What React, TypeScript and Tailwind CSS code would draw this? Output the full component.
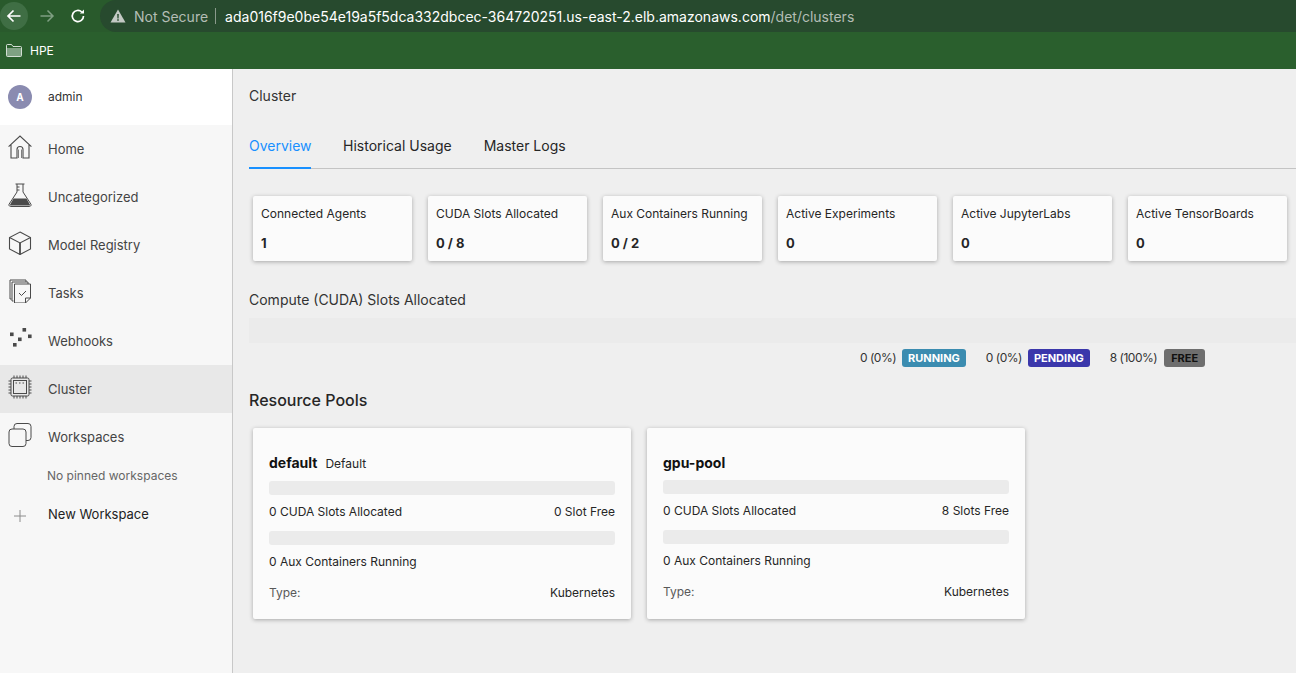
import React from "react";

const stats = [
  { label: "Connected Agents", value: "1" },
  { label: "CUDA Slots Allocated", value: "0 / 8" },
  { label: "Aux Containers Running", value: "0 / 2" },
  { label: "Active Experiments", value: "0" },
  { label: "Active JupyterLabs", value: "0" },
  { label: "Active TensorBoards", value: "0" },
];

const iconClass = "w-6 h-6 mb-1 shrink-0 text-[#4a4a4a]";

const HomeIcon = () => (
  <svg viewBox="0 0 24 24" fill="none" stroke="currentColor" strokeWidth="1.1" className={iconClass}>
    <path d="M0.6 11.6 L12 1 L23.4 11.6 M3 9.5 V23 H9 V14.5 A3 3 0 0 1 15 14.5 V23 H21 V9.5 M3 23 H4.5" />
    <path d="M10.5 23 V14.5 M13.5 23 V14.5" strokeWidth="0.7" />
  </svg>
);

const FlaskIcon = () => (
  <svg viewBox="0 0 24 24" fill="none" stroke="currentColor" strokeWidth="1" className={iconClass}>
    <path d="M7.5 1 H16.5 M9 1 V9 L1.2 21 A1.6 1.6 0 0 0 2.6 23.5 H21.4 A1.6 1.6 0 0 0 22.8 21 L15 9 V1 M9 4 H11.5 M9 7 H11.5" />
    <path d="M5.5 15.5 H18.5 L22.4 22.5 H1.6 Z" fill="currentColor" stroke="none" />
  </svg>
);

const CubeIcon = () => (
  <svg viewBox="0 0 24 24" fill="none" stroke="currentColor" strokeWidth="1.1" className={iconClass}>
    <path d="M12 1 L22.5 6.5 V18 L12 23.5 L1.5 18 V6.5 Z M1.5 6.5 L12 12 L22.5 6.5" />
    <path d="M12 12 V23.5" strokeWidth="1.8" />
  </svg>
);

const TasksIcon = () => (
  <svg viewBox="0 0 24 24" fill="none" stroke="currentColor" strokeWidth="1" className={iconClass}>
    <path d="M3.5 20 H2 V1 H18 V3" />
    <path d="M5.5 22 H4 V3 H20 V5" />
    <path d="M6.5 5 H22.5 V19 L17.5 24 H6.5 Z M22.5 19 H17.5 V24" />
    <path d="M11 14 L13.5 16.5 L18 12" />
  </svg>
);

const WebhooksIcon = () => (
  <svg viewBox="0 0 24 24" fill="currentColor" className={iconClass}>
    <rect x="2" y="5.5" width="3.6" height="3.6" />
    <rect x="14.5" y="1" width="3.6" height="3.6" />
    <rect x="20" y="7.5" width="3.6" height="3.6" />
    <rect x="10" y="10.5" width="3.6" height="3.6" />
    <rect x="5" y="16" width="3.6" height="3.6" />
  </svg>
);

const ClusterIcon = () => (
  <svg viewBox="0 0 24 24" fill="none" stroke="currentColor" strokeWidth="1" className={iconClass}>
    <rect x="3" y="3" width="18" height="18" rx="1.5" />
    <rect x="5.5" y="5.5" width="13" height="13" />
    <path d="M6 0.5 V3 M9 0.5 V3 M12 0.5 V3 M15 0.5 V3 M18 0.5 V3 M6 21 V23.5 M9 21 V23.5 M12 21 V23.5 M15 21 V23.5 M18 21 V23.5 M0.5 6 H3 M0.5 9 H3 M0.5 12 H3 M0.5 15 H3 M0.5 18 H3 M21 6 H23.5 M21 9 H23.5 M21 12 H23.5 M21 15 H23.5 M21 18 H23.5" />
    <path d="M7.5 8 H9 M11 8 H12.5 M14.5 8 H16" strokeWidth="1.2" />
  </svg>
);

const WorkspacesIcon = () => (
  <svg viewBox="0 0 24 24" fill="none" stroke="currentColor" strokeWidth="1" className={iconClass}>
    <rect x="1" y="6" width="17" height="17.5" rx="3" />
    <path d="M6 6 V3.5 A3 3 0 0 1 9 0.5 H20 A3 3 0 0 1 23 3.5 V14.5 A3 3 0 0 1 20 17.5 H18" />
  </svg>
);

const nav = [
  { label: "Home", icon: <HomeIcon /> },
  { label: "Uncategorized", icon: <FlaskIcon /> },
  { label: "Model Registry", icon: <CubeIcon /> },
  { label: "Tasks", icon: <TasksIcon /> },
  { label: "Webhooks", icon: <WebhooksIcon /> },
  { label: "Cluster", icon: <ClusterIcon />, active: true },
  { label: "Workspaces", icon: <WorkspacesIcon /> },
];

function Browser() {
  return (
    <div className="shrink-0 text-white">
      <div className="h-8 bg-[#295a2c] flex items-center">
        <div className="w-[28px] h-[28px] rounded-full bg-[#3f6e44] flex items-center justify-center">
          <svg viewBox="0 0 16 16" fill="none" stroke="white" strokeWidth="1.7" className="w-4 h-4">
            <path d="M14.5 8 H2 M7.5 2.5 L2 8 L7.5 13.5" />
          </svg>
        </div>
        <svg viewBox="0 0 16 16" fill="none" stroke="#7f9f83" strokeWidth="1.5" className="w-4 h-4 ml-[11px]">
          <path d="M1.5 8 H14 M8.5 2.5 L14 8 L8.5 13.5" />
        </svg>
        <svg viewBox="0 0 16 16" fill="none" stroke="white" strokeWidth="1.7" className="w-4 h-4 ml-[15px]">
          <path d="M13.5 8 A5.6 5.6 0 1 1 11.8 4" />
          <path d="M14 1.5 V5.6 H9.9 Z" fill="white" stroke="none" />
        </svg>
        <div className="ml-[14px] flex-1 h-8 rounded-l-full bg-[#274a2e] flex items-center pl-[10px] text-[14px]">
          <svg viewBox="0 0 16 16" className="w-4 h-4">
            <path d="M8 1.5 L15.5 14.5 H0.5 Z" fill="#c3c9c4" />
            <path d="M7.2 6 H8.8 L8.6 10.5 H7.4 Z M7.2 11.3 H8.8 V12.8 H7.2 Z" fill="#274a2e" />
          </svg>
          <span className="ml-[8px] text-[#b4bdb5]">Not Secure</span>
          <span className="ml-[7px] w-px h-[16px] bg-[#8a9a8c]" />
          <span className="ml-[9px]">ada016f9e0be54e19a5f5dca332dbcec-364720251.us-east-2.elb.amazonaws.com<span className="text-[#b4bdb5]">/det/clusters</span></span>
        </div>
      </div>
      <div className="h-[37px] bg-[#2a5f2d] flex items-center pl-[6px] text-[12px]">
        <svg viewBox="0 0 16 13" fill="none" stroke="white" strokeWidth="0.8" className="w-4 h-[13px]">
          <path d="M1 4 H15 V12 H1 Z" fill="#7fa183" stroke="none" />
          <path d="M0.5 1.5 A1 1 0 0 1 1.5 0.5 H5.5 L7 2.5 H14.5 A1 1 0 0 1 15.5 3.5 V11.5 A1 1 0 0 1 14.5 12.5 H1.5 A1 1 0 0 1 0.5 11.5 Z" />
        </svg>
        <span className="ml-[8px]">HPE</span>
      </div>
    </div>
  );
}

function Sidebar() {
  return (
    <aside className="w-[233px] shrink-0 bg-[#f7f7f7] border-r border-[#c8c8c8] text-[13px] text-[#444]">
      <div className="h-14 bg-white flex items-center pl-2">
        <div className="w-6 h-6 rounded-full bg-[#8a8bb0] text-white text-[10px] font-bold flex items-center justify-center">A</div>
        <span className="ml-4 text-[12px] text-[#333]">admin</span>
      </div>
      {nav.map((item) => (
        <div key={item.label} className={`h-12 flex items-center pl-2 ${item.active ? "bg-[#e8e8e8]" : ""}`}>
          {item.icon}
          <span className="ml-4 pt-[2px]">{item.label}</span>
        </div>
      ))}
      <div className="mt-[7px] pl-[47px] text-[12px] text-[#666] leading-4">No pinned workspaces</div>
      <div className="mt-[7px] h-12 flex items-center pl-[14px] text-[#222]">
        <svg viewBox="0 0 12 12" stroke="#8c8c8c" strokeWidth="1" className="w-3 h-3 mt-[2px]">
          <path d="M6 0 V12 M0 6 H12" />
        </svg>
        <span className="ml-[22px]">New Workspace</span>
      </div>
    </aside>
  );
}

function Legend({ text, label, className }: { text: string; label: string; className: string }) {
  return (
    <div className="flex items-center gap-[6px]">
      <span className="text-[12px] text-[#333] tracking-[-0.5px]">{text}</span>
      <span className={`h-[18px] rounded-[3px] text-[11px] font-bold flex items-center ${className}`}>{label}</span>
    </div>
  );
}

function PoolCard({ name, tag, slots, aux }: { name: string; tag?: string; slots: string; aux: string }) {
  return (
    <div className="w-[378px] h-[191px] bg-[#fbfbfb] rounded-[2px] shadow-[0_1px_4px_rgba(0,0,0,0.3)] px-4 pt-[24px] text-[12px] text-[#262626]">
      <div className={`flex items-baseline ${tag ? "h-[18px]" : "h-[17px]"}`}>
        <span className="text-[14px] font-bold text-[#111]">{name}</span>
        {tag && <span className="ml-2">{tag}</span>}
      </div>
      <div className="mt-[11px] h-[14px] rounded-[3px] bg-[#ebebeb]" />
      <div className="mt-[9px] flex justify-between leading-4">
        <span>0 CUDA Slots Allocated</span>
        <span>{slots}</span>
      </div>
      <div className="mt-[11px] h-[14px] rounded-[3px] bg-[#ebebeb]" />
      <div className="mt-[9px] leading-4">{aux}</div>
      <div className="mt-[15px] flex justify-between leading-4">
        <span className="text-[#595959]">Type:</span>
        <span>Kubernetes</span>
      </div>
    </div>
  );
}

export default function App() {
  return (
    <div className="w-[1296px] h-[673px] overflow-hidden flex flex-col bg-[#efefef] font-['Inter',sans-serif]">
      <Browser />
      <div className="flex flex-1 min-h-0">
        <Sidebar />
        <main className="flex-1 min-w-0 pl-4">
          <h1 className="mt-[18px] text-[14px] leading-[17px] text-[#333]">Cluster</h1>
          <div className="mt-[24px] h-[41px] flex items-stretch border-b border-[#c4c4c4] text-[14px] text-[#262626]">
            <div className="pt-[7px] w-[62px] text-[#1890ff] border-b-2 border-[#1890ff] h-[41px]">Overview</div>
            <div className="pt-[7px] ml-[32px]">Historical Usage</div>
            <div className="pt-[7px] ml-[32px]">Master Logs</div>
          </div>
          <div className="mt-[27px] ml-[4px] flex gap-[16px]">
            {stats.map((stat) => (
              <div key={stat.label} className="w-[159px] h-[65px] shrink-0 bg-[#fbfbfb] rounded-[2px] shadow-[0_1px_4px_rgba(0,0,0,0.3)] px-2 pt-[10px]">
                <div className="text-[12px] leading-4 text-[#262626] whitespace-nowrap">{stat.label}</div>
                <div className="mt-[13px] text-[13px] leading-4 font-bold text-[#262626]">{stat.value}</div>
              </div>
            ))}
          </div>
          <h2 className="mt-[30px] text-[14px] leading-[17px] text-[#333]">Compute (CUDA) Slots Allocated</h2>
          <div className="mt-[10px] h-[25px] bg-[#ebebeb]" />
          <div className="mt-[6px] h-[18px] flex items-center pl-[611px] gap-[20px]">
            <Legend text="0 (0%)" label="RUNNING" className="px-[6px] bg-[#3b8cb0] text-white" />
            <Legend text="0 (0%)" label="PENDING" className="px-[6px] bg-[#3b37ab] text-white" />
            <Legend text="8 (100%)" label="FREE" className="ml-[1px] px-[7px] bg-[#6e6e6e] text-[#111]" />
          </div>
          <h2 className="mt-[23px] text-[16px] leading-[20px] font-medium text-[#262626]">Resource Pools</h2>
          <div className="mt-[18px] ml-[4px] flex gap-[16px]">
            <PoolCard name="default" tag="Default" slots="0 Slot Free" aux="0 Aux Containers Running" />
            <PoolCard name="gpu-pool" slots="8 Slots Free" aux="0 Aux Containers Running" />
          </div>
        </main>
      </div>
    </div>
  );
}
